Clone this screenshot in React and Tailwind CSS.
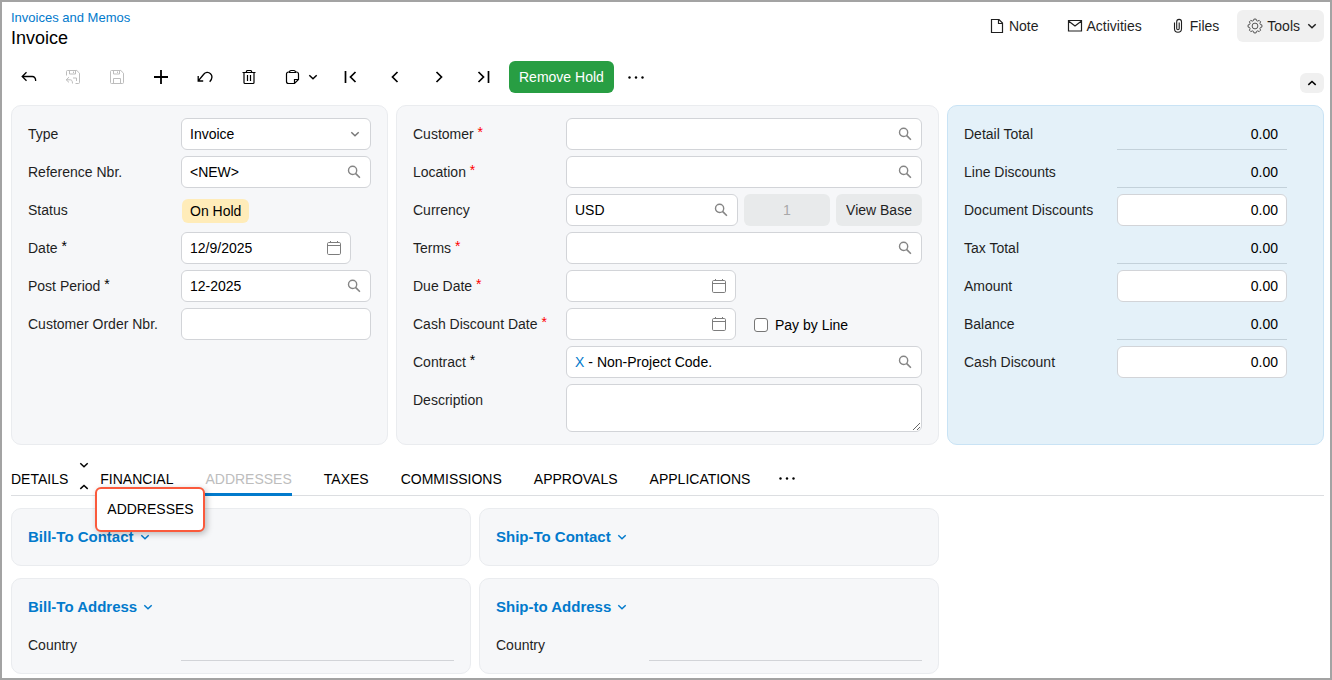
import React from 'react';

const Icon = ({ children, className = '' }) => (
  <svg
    viewBox="0 0 16 16"
    fill="none"
    stroke="currentColor"
    aria-hidden="true"
    className={`w-4 h-4 shrink-0 ${className}`}
  >
    {children}
  </svg>
);

const ChevronDown = ({ className }) => (
  <Icon className={className}><path d="m4.300 6.300 3.700 3.400 3.700-3.400" strokeWidth="1.500" /></Icon>
);

const ChevronUp = ({ className }) => (
  <Icon className={className}><path d="m4.300 9.900 3.700-3.400 3.700 3.400" strokeWidth="1.500" /></Icon>
);

const SearchIcon = () => (
  <Icon className="text-[#858585]">
    <circle cx="6.6" cy="6.4" r="4.1" strokeWidth="1.4" />
    <path d="m9.5 9.4 4.400 4.400" strokeWidth="1.600" />
  </Icon>
);

const CalendarIcon = () => (
  <Icon className="text-[#7d7d7d]">
    <rect x="1.5" y="2.5" width="13" height="12" rx="1.2" />
    <path d="M1.5 5.5h13M4.5 1v2M11.5 1v2" />
  </Icon>
);

const MoreIcon = () => (
  <svg viewBox="0 0 18 4" fill="currentColor" aria-hidden="true" className="w-[18px] h-1">
    <circle cx="2.5" cy="2.5" r="1.2" />
    <circle cx="9" cy="2.5" r="1.2" />
    <circle cx="15.5" cy="2.5" r="1.2" />
  </svg>
);

// Gear outline: four points per tooth, eight teeth
const gearPoints = Array.from({ length: 32 }, (_, i) => {
  const angle = ((Math.floor(i / 4) * 45 + [-15, -9, 9, 15][i % 4]) * Math.PI) / 180;
  const radius = i % 4 === 1 || i % 4 === 2 ? 7 : 5.6;
  return `${(8 + radius * Math.sin(angle)).toFixed(2)},${(8 - radius * Math.cos(angle)).toFixed(2)}`;
}).join(' ');

const GearIcon = () => (
  <Icon className="text-[#555]">
    <circle cx="8" cy="8" r="2.9" />
    <polygon points={gearPoints} strokeLinejoin="round" />
  </Icon>
);

const actions = [
  {
    label: 'Back',
    icon: <path d="M5.5 3.200 1.2 7.5l4.3 4.300M1.2 7.5h10c2.300 0 3.500 1.500 3.500 4.500" strokeWidth="1.3" />
  },
  {
    label: 'Save and close',
    disabled: true,
    icon: (
      <path d="M1.500 6.500V2.500a1 1 0 0 1 1-1h9.300l2.700 2.700v9.300a1 1 0 0 1-1 1H10.500M4.500 1.500v3.500h6V1.500M8.500 2.500V4M8 9h3.500v3M4 8.200 1.200 10.800l2.800 2.600M1.200 10.800h4c1.500 0 2.300 1 2.300 3.700" />
    )
  },
  {
    label: 'Save',
    disabled: true,
    icon: (
      <path d="M2.500 1.500h9.300l2.700 2.700v9.300a1 1 0 0 1-1 1h-11a1 1 0 0 1-1-1v-11a1 1 0 0 1 1-1ZM4.500 1.500v3.500h6V1.500M8.500 2.500V4M4.500 14.500V9.500h7v5" />
    )
  },
  { label: 'Add new record', icon: <path d="M8 1v14M1 8h14" strokeWidth="1.8" /> },
  {
    label: 'Undo',
    icon: <path d="M1.200 7v5h5M1.500 11.700l5-6.200C8.300 3 11.500 2.700 13.500 4.700c1.900 1.900 1.800 5-.8 8" strokeWidth="1.3" />
  },
  {
    label: 'Delete',
    icon: (
      <path d="M1.500 3.500h13M5 3.500l1-2h4l1 2M3 3.500v10a1 1 0 0 0 1 1h8a1 1 0 0 0 1-1v-10M6.500 6v6M9.500 6v6" strokeWidth="1.2" />
    )
  }
];

const navigation = [
  { label: 'First', icon: <path d="M2.500 2v12M12.500 3 7.500 8l5 5" strokeWidth="1.7" /> },
  { label: 'Previous', icon: <path d="M10.500 3 5.500 8l5 5" strokeWidth="1.7" /> },
  { label: 'Next', icon: <path d="m5.500 3 5 5-5 5" strokeWidth="1.7" /> },
  { label: 'Last', icon: <path d="M13.500 2v12M3.500 3l5 5-5 5" strokeWidth="1.7" /> }
];

const totals = [
  { label: 'Detail Total', readOnly: true },
  { label: 'Line Discounts', readOnly: true },
  { label: 'Document Discounts' },
  { label: 'Tax Total', readOnly: true },
  { label: 'Amount' },
  { label: 'Balance', readOnly: true },
  { label: 'Cash Discount' }
];

const tabs = ['DETAILS', 'FINANCIAL', 'ADDRESSES', 'TAXES', 'COMMISSIONS', 'APPROVALS', 'APPLICATIONS'];

const ToolbarButton = ({ label, icon, disabled }) => (
  <button
    type="button"
    aria-label={label}
    disabled={disabled}
    className="w-9 h-8 flex items-center justify-center text-black disabled:text-[#bdbdbd]"
  >
    <Icon>{icon}</Icon>
  </button>
);

const Panel = ({ children, className = 'bg-[#f6f7f9] border-[#eaecef]' }) => (
  <section className={`min-w-0 border rounded-[10px] px-4 py-3 flex flex-col gap-1.5 ${className}`}>
    {children}
  </section>
);

const Row = ({ label, id, required, children }) => (
  <div className="flex items-start">
    <label htmlFor={id} className="w-[153px] shrink-0 leading-8 whitespace-nowrap">
      {label}
      {required && (
        <span className={`leading-none align-[2px] ${required === 'empty' ? 'text-[#ff0000]' : 'text-black'}`}> *</span>
      )}
    </label>
    {children}
  </div>
);

const Field = ({ id, value = '', icon, link, className = 'flex-1' }) => (
  <div className={`min-w-0 h-8 flex items-center gap-1 px-2 bg-white border border-[#d2d4d8] rounded-md ${className}`}>
    {link && <a href="#contract" className="text-[#027acc]">{link}</a>}
    <input id={id} type="text" defaultValue={value} className="min-w-0 flex-1 text-black outline-none" />
    {icon}
  </div>
);

const AddressPanel = ({ title, id, country }) => (
  <Panel>
    <h2>
      <button type="button" className="h-8 flex items-center gap-[3px] text-[15px] font-bold text-[#027acc]">
        {title}
        <ChevronDown />
      </button>
    </h2>
    {country && (
      <Row label="Country" id={id}>
        <input id={id} readOnly className="min-w-0 flex-1 h-8 px-2 border-b border-[#d2d4d8] outline-none" />
      </Row>
    )}
  </Panel>
);

const App = () => (
  <div className="min-h-screen bg-white border-2 border-[#a3a3a3] pt-2 pr-1.5 pb-1 pl-[9px] font-['Liberation_Sans',Arial,sans-serif] text-sm text-[#1f1f1f]">
    <header className="flex justify-between">
      <div>
        <a href="#invoices" className="block text-[13px] leading-4 text-[#027acc]">Invoices and Memos</a>
        <h1 className="text-lg leading-6 text-black">Invoice</h1>
      </div>
      <div className="flex gap-2">
        <button type="button" className="h-8 px-2.5 flex items-center gap-1">
          <Icon><path d="M2.500 1.500h7.500l3.500 3.500v9.500h-11zM9.500 1.500v4h4" strokeWidth="1.200" /></Icon>
          Note
        </button>
        <button type="button" className="h-8 px-2.5 flex items-center gap-1">
          <Icon><path d="M1.500 2.500h13v10.500h-13zM1.500 3 8 8l6.500-5" strokeWidth="1.200" /></Icon>
          Activities
        </button>
        <button type="button" className="h-8 px-2.5 flex items-center gap-1">
          <Icon>
            <path d="M4.500 4.500v6.300a3.500 3.500 0 0 0 7 0V3.800a2.400 2.400 0 0 0-4.800 0v6.700a1.200 1.200 0 0 0 2.500 0V4.500" strokeWidth="1.100" />
          </Icon>
          Files
        </button>
        <button type="button" className="h-8 pl-2.5 pr-1 flex items-center gap-1 bg-[#f0f0f0] rounded-md">
          <GearIcon />
          Tools
          <ChevronDown />
        </button>
      </div>
    </header>

    {/* Toolbar */}
    <div className="mt-[11px] flex items-center gap-2">
      {actions.map((action) => (
        <ToolbarButton key={action.label} {...action} />
      ))}
      <button type="button" aria-label="Clipboard" className="w-[50px] h-8 pl-2.5 flex items-center gap-1 text-black">
        <Icon>
          <path d="M4.500 3h-1a2 2 0 0 0-2 2v7.500a2 2 0 0 0 2 2H9.500l4-4V5a2 2 0 0 0-2-2h-1M4.500 3.500c0-1.300.7-2 1.700-2h2.600c1 0 1.700.7 1.700 2zM9.500 14.500v-4h4" strokeWidth="1.200" />
        </Icon>
        <ChevronDown />
      </button>
      {navigation.map((item) => (
        <ToolbarButton key={item.label} {...item} />
      ))}
      <button type="button" className="h-8 px-2.5 bg-[#289e43] text-white rounded-md">Remove Hold</button>
      <button type="button" aria-label="More actions" className="w-7 h-8 flex items-center justify-center text-black">
        <MoreIcon />
      </button>
      <button
        type="button"
        aria-label="Collapse summary"
        className="ml-auto self-end w-6 h-5 flex items-center justify-center bg-[#f0f0f0] text-black rounded-md"
      >
        <ChevronUp />
      </button>
    </div>

    {/* Summary */}
    <form className="mt-3 grid grid-cols-[377fr_543fr_377fr] gap-2">
      <Panel>
        <Row label="Type" id="type">
          <div className="relative flex-1">
            <select
              id="type"
              className="w-full h-8 px-2 appearance-none bg-white border border-[#d2d4d8] rounded-md text-black outline-none"
            >
              <option>Invoice</option>
            </select>
            <ChevronDown className="absolute right-2 top-2 text-[#777] pointer-events-none" />
          </div>
        </Row>
        <Row label="Reference Nbr." id="reference">
          <Field id="reference" value="<NEW>" icon={<SearchIcon />} />
        </Row>
        <Row label="Status" id="status">
          <div className="h-8 pt-0.5 pl-px flex items-center">
            <output id="status" className="h-6 px-2 leading-6 bg-[#ffecb9] text-black rounded-md">On Hold</output>
          </div>
        </Row>
        <Row label="Date" id="date" required="filled">
          <Field id="date" value="12/9/2025" icon={<CalendarIcon />} className="w-[170px]" />
        </Row>
        <Row label="Post Period" id="period" required="filled">
          <Field id="period" value="12-2025" icon={<SearchIcon />} />
        </Row>
        <Row label="Customer Order Nbr." id="order">
          <Field id="order" />
        </Row>
      </Panel>

      <Panel>
        <Row label="Customer" id="customer" required="empty">
          <Field id="customer" icon={<SearchIcon />} />
        </Row>
        <Row label="Location" id="location" required="empty">
          <Field id="location" icon={<SearchIcon />} />
        </Row>
        <Row label="Currency" id="currency">
          <div className="min-w-0 flex-1 grid grid-cols-[2fr_1fr_1fr] gap-1.5">
            <Field id="currency" value="USD" icon={<SearchIcon />} />
            <input
              aria-label="Exchange rate"
              disabled
              defaultValue="1"
              className="min-w-0 h-8 bg-[#e8eaeb] text-center text-[#a8a8a8] rounded-md"
            />
            <button type="button" className="h-8 bg-[#e8eaeb] rounded-md whitespace-nowrap">View Base</button>
          </div>
        </Row>
        <Row label="Terms" id="terms" required="empty">
          <Field id="terms" icon={<SearchIcon />} />
        </Row>
        <Row label="Due Date" id="due" required="empty">
          <Field id="due" icon={<CalendarIcon />} className="w-[170px]" />
        </Row>
        <Row label="Cash Discount Date" id="discount-date" required="empty">
          <Field id="discount-date" icon={<CalendarIcon />} className="w-[170px]" />
          <label className="ml-[18px] h-8 pt-0.5 flex items-center gap-[7px] text-black whitespace-nowrap">
            <input type="checkbox" className="w-3.5 h-3.5 appearance-none bg-white border border-[#767676] rounded-[3px]" />
            Pay by Line
          </label>
        </Row>
        <Row label="Contract" id="contract" required="filled">
          <Field id="contract" link="X" value="- Non-Project Code." icon={<SearchIcon />} />
        </Row>
        <Row label="Description" id="description">
          <textarea
            id="description"
            className="min-w-0 flex-1 h-12 px-2 py-1 resize bg-white border border-[#d2d4d8] rounded-md outline-none"
          />
        </Row>
      </Panel>

      <Panel className="bg-[#e4f1f9] border-[#c9e3f5]">
        {totals.map(({ label, readOnly }) => (
          <Row key={label} label={label} id={label}>
            <input
              id={label}
              defaultValue="0.00"
              readOnly={readOnly}
              className={`min-w-0 w-[170px] h-8 px-2 text-right text-black outline-none ${
                readOnly ? 'pr-[9px] border-b border-[#c3d1da]' : 'bg-white border border-[#d2d4d8] rounded-md'
              }`}
            />
          </Row>
        ))}
      </Panel>
    </form>

    {/* Tabs */}
    <div className="relative mt-4">
      <div role="tablist" className="flex gap-8 border-b border-[#dcdee1]">
        {tabs.map((tab) => (
          <button
            key={tab}
            type="button"
            role="tab"
            aria-selected={tab === 'ADDRESSES'}
            className={`h-[35px] -mb-px border-b-3 pt-[3px] ${
              tab === 'ADDRESSES' ? 'border-[#027acc] text-[#bdbdbd]' : 'border-transparent text-black'
            }`}
          >
            {tab}
          </button>
        ))}
        <button type="button" aria-label="More tabs" className="-ml-1 flex items-center text-black">
          <MoreIcon />
        </button>
      </div>

      {/* Drop marker and the tab being dragged */}
      <ChevronDown className="absolute left-[65px] -top-1 text-black" />
      <ChevronUp className="absolute left-[65px] top-[18px] text-black" />
      <div className="absolute left-[84px] top-[26px] w-[110px] h-[45px] pl-px pb-0.5 flex items-center justify-center bg-white text-black border-2 border-[#fa5a3c] rounded-md shadow-[2px_2px_6px_rgba(0,0,0,0.25)]">
        ADDRESSES
      </div>
    </div>

    <div className="mt-3 grid grid-cols-[460fr_460fr_377fr] gap-x-2 gap-y-3">
      <AddressPanel title="Bill-To Contact" />
      <AddressPanel title="Ship-To Contact" />
      <div />
      <AddressPanel title="Bill-To Address" id="bill-country" country />
      <AddressPanel title="Ship-to Address" id="ship-country" country />
    </div>
  </div>
);

export default App;
